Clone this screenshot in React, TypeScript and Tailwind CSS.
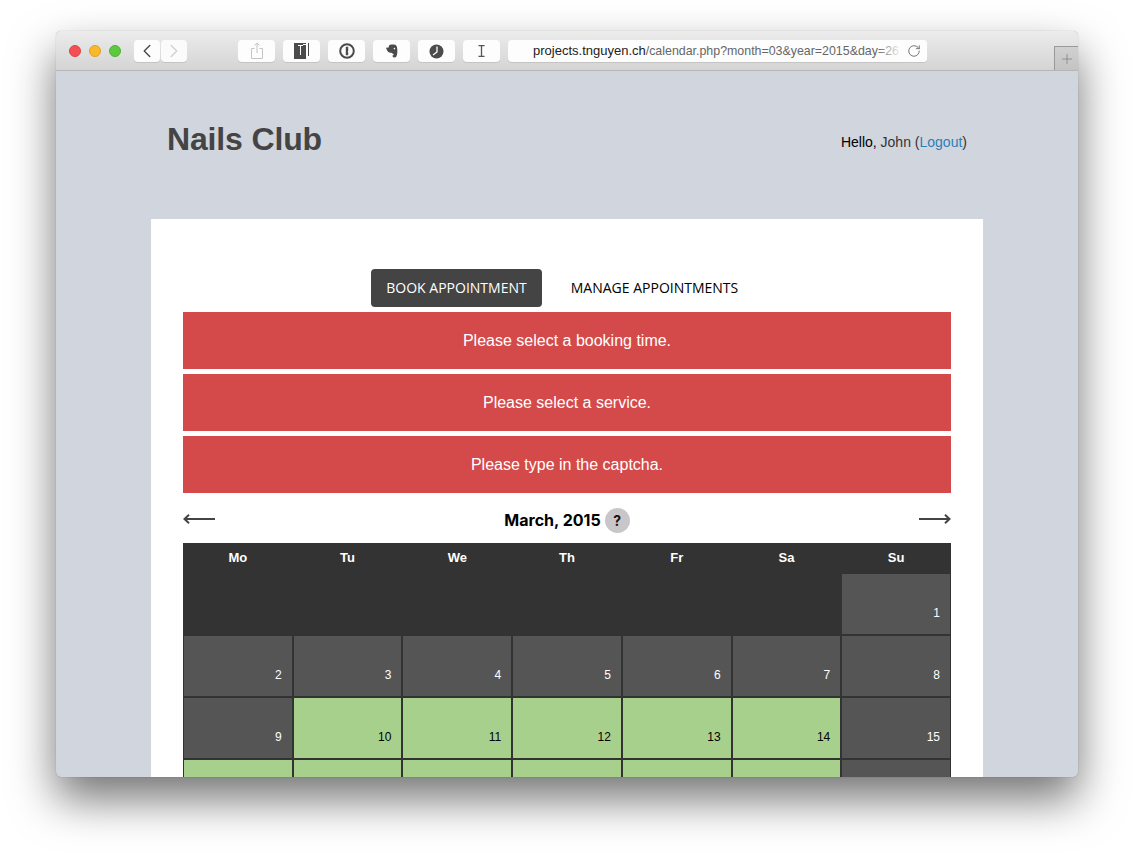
import React from "react";
import { ChevronLeft, ChevronRight, RotateCw, Plus } from "lucide-react";

const ToolButton = ({ children }: { children: React.ReactNode }) => (
  <div className="w-[37px] h-[22px] bg-[#fdfdfd] rounded-[4px] shadow-[0_1px_0_#c4c4c4] flex items-center justify-center">
    {children}
  </div>
);

const ShareIcon = () => (
  <svg width="14" height="18" viewBox="0 0 14 18" fill="none" stroke="#c4c4c4" strokeWidth="1">
    <path d="M4.5 6.5H1.5V16.5H12.5V6.5H9.5" />
    <path d="M7 11V1M4.5 3.5L7 1L9.5 3.5" />
  </svg>
);

const BookmarkIcon = () => (
  <svg width="15" height="16" viewBox="0 0 15 16">
    <path d="M0 0H12V16H0Z" fill="#4b4b4b" />
    <path d="M4 2H9V3H7V12H6V3H4ZM9 1H14V13H13V2H9Z" fill="#fff" />
    <path d="M14 0H15V13H14Z" fill="#4b4b4b" />
  </svg>
);

const OnePasswordIcon = () => (
  <svg width="16" height="16" viewBox="0 0 16 16">
    <circle cx="8" cy="8" r="6.8" fill="none" stroke="#4b4b4b" strokeWidth="2" />
    <path d="M6.8 3.8H9.2V8.2L8.7 8.8L9.2 9.4V12.2H6.8V8Z" fill="#4b4b4b" />
  </svg>
);

const ElephantIcon = () => (
  <svg width="12" height="14" viewBox="0 0 12 14">
    <path
      d="M3 1.5C4 .3 7 .2 9 .8C10.5 1.3 11 2.6 11.2 4.5C11.6 7.5 11.4 10.4 10.4 12.4C9.6 13.8 7.2 14 6.6 12.6C6.2 11.4 7 10.6 8 11C7 9.4 5.6 8.8 4.4 8.8C2.8 8.8 1.2 7.4 .6 5.2L0 3.8L2.6 3.6Z"
      fill="#4b4b4b"
    />
    <circle cx="8.4" cy="4.6" r=".8" fill="#fff" />
  </svg>
);

const ClockIcon = () => (
  <svg width="15" height="15" viewBox="0 0 15 15">
    <circle cx="7.5" cy="7.5" r="7" fill="#4b4b4b" />
    <path d="M8 2.5V8L4 11" fill="none" stroke="#fff" strokeWidth="1.3" />
  </svg>
);

const BeamIcon = () => (
  <svg width="7" height="12" viewBox="0 0 7 12" fill="none" stroke="#555" strokeWidth="1.3">
    <path d="M.5 .7H6.5M3.5 .7V11.3M.5 11.3H6.5" />
  </svg>
);

const Arrow = ({ flip }: { flip?: boolean }) => (
  <svg width="32" height="12" viewBox="0 0 32 12" fill="none" stroke="#444" className={`mb-[2px] ${flip ? "rotate-180" : ""}`}>
    <path d="M1.5 6H32" strokeWidth="2" />
    <path d="M6 1.8L1.5 6L6 10.2" strokeWidth="2" />
  </svg>
);

const Alert = ({ text }: { text: string }) => (
  <div className="h-[57px] bg-[#d44a4a] text-white text-[16px] flex items-center justify-center">{text}</div>
);

const days = ["Mo", "Tu", "We", "Th", "Fr", "Sa", "Su"];

// 0 = empty, 1 = closed (grey), 2 = open (green)
const rows: { day: number | null; kind: number }[][] = [
  [
    ...[0, 0, 0, 0, 0, 0].map(() => ({ day: null, kind: 0 })),
    { day: 1, kind: 1 },
  ],
  [2, 3, 4, 5, 6, 7, 8].map((d) => ({ day: d, kind: 1 })),
  [9, 10, 11, 12, 13, 14, 15].map((d) => ({ day: d, kind: d === 9 || d === 15 ? 1 : 2 })),
  // this row runs past the window, its numbers are never in view
  [16, 17, 18, 19, 20, 21, 22].map((d) => ({ day: null, kind: d === 22 ? 1 : 2 })),
];

const cellColors: Record<number, string> = {
  0: "bg-[#333333]",
  1: "bg-[#555555] text-white",
  2: "bg-[#a8d08d] text-black",
};

export default function App() {
  return (
    <div
      className="w-[1134px] h-[857px] overflow-hidden bg-white pt-[31px] pl-[56px]"
      style={{ fontFamily: '"Liberation Sans", Arial, sans-serif' }}
    >
      <div className="relative w-[1022px] h-[746px] rounded-[5px] overflow-hidden bg-[#d1d5de] shadow-[0_22px_45px_0_rgba(0,0,0,0.55),0_0_1px_rgba(0,0,0,0.35)]">
        {/* title bar */}
        <div className="h-[40px] bg-gradient-to-b from-[#ececec] to-[#d4d4d4] border-b border-[#b5b5b5] flex items-start pt-[9px] pl-[13px]">
          <div className="flex items-center gap-[8px] h-[22px]">
            <div className="w-[12px] h-[12px] rounded-full bg-[#f25056] border border-[#e0443e]" />
            <div className="w-[12px] h-[12px] rounded-full bg-[#fab82b] border border-[#dea123]" />
            <div className="w-[12px] h-[12px] rounded-full bg-[#5cc93e] border border-[#4fb233]" />
          </div>
          <div className="flex ml-[13px] gap-[1px]">
            <div className="w-[26px] h-[22px] bg-[#fdfdfd] rounded-[4px] shadow-[0_1px_0_#c4c4c4] flex items-center justify-center">
              <ChevronLeft size={22} strokeWidth={1.6} color="#4b4b4b" />
            </div>
            <div className="w-[26px] h-[22px] bg-[#fbfbfb] rounded-[4px] shadow-[0_1px_0_#c4c4c4] flex items-center justify-center">
              <ChevronRight size={22} strokeWidth={1.6} color="#d2d2d2" />
            </div>
          </div>
          <div className="flex gap-[8px] ml-[51px]">
            <ToolButton><ShareIcon /></ToolButton>
            <ToolButton><BookmarkIcon /></ToolButton>
            <ToolButton><OnePasswordIcon /></ToolButton>
            <ToolButton><ElephantIcon /></ToolButton>
            <ToolButton><ClockIcon /></ToolButton>
            <ToolButton><BeamIcon /></ToolButton>
          </div>
          <div className="relative ml-[8px] w-[419px] h-[22px] bg-[#fdfdfd] rounded-[4px] shadow-[0_1px_0_#c4c4c4] pl-[25px] pr-[32px] flex items-center overflow-hidden whitespace-nowrap">
            <span className="text-[#222] text-[13px]">projects.tnguyen.ch</span>
            <span className="text-[#666] text-[12.4px]">/calendar.php?month=03&amp;year=2015&amp;day=26</span>
            <div className="absolute right-0 top-0 h-[22px] w-[50px] bg-gradient-to-r from-transparent via-[#fdfdfd] via-50% to-[#fdfdfd] flex items-center justify-end pr-[6px]">
              <RotateCw size={14} strokeWidth={1.5} color="#666" />
            </div>
          </div>
        </div>
        <div className="absolute right-0 top-[15px] w-[24px] h-[24px] border-l border-t border-[#999999] bg-gradient-to-b from-[#d0d0d0] to-[#c4c4c4] flex items-center justify-center">
          <Plus size={16} strokeWidth={1} color="#777" />
        </div>

        {/* page */}
        <div className="flex justify-between items-start pl-[111px] pr-[111px] pt-[48px] h-[148px]">
          <h1 className="text-[32px] leading-[40px] font-bold text-[#444] tracking-[-0.15px]">Nails Club</h1>
          <p className="text-[14px] leading-[20px] mt-[13px] text-[#333]">
            <span className="text-black">Hello,</span> John (<span className="text-[#2a7fb8]">Logout</span>)
          </p>
        </div>

        <div className="mx-[95px] bg-white px-[32px] pt-[50px] h-[700px]">
          <div className="flex justify-center items-center gap-[14px] h-[38px] pr-[10px] text-[14px] uppercase" style={{ fontFamily: '"Open Sans", sans-serif' }}>
            <div className="h-[38px] w-[171px] bg-[#444444] text-white rounded-[4px] flex items-center justify-center pb-[2px]">Book appointment</div>
            <div className="h-[38px] w-[197px] text-black flex items-center justify-center pb-[2px]">Manage appointments</div>
          </div>
          <div className="flex flex-col gap-[5px] mt-[5px]">
            <Alert text="Please select a booking time." />
            <Alert text="Please select a service." />
            <Alert text="Please type in the captcha." />
          </div>
          <div className="flex items-center justify-between h-[50px] pt-[4px]">
            <Arrow />
            <div className="flex items-center gap-[4px]">
              <span className="text-[16px] font-bold text-black" style={{ fontFamily: "Inter, sans-serif" }}>March, 2015</span>
              <span className="w-[25px] h-[25px] rounded-full bg-[#c8c6c8] text-[#111] text-[14px] font-bold flex items-center justify-center" style={{ fontFamily: "Inter, sans-serif" }}>?</span>
            </div>
            <Arrow flip />
          </div>
          <div className="bg-[#333333]">
            <div className="grid grid-cols-7 h-[31px] text-white text-[13px] font-bold pb-[1px]">
              {days.map((d) => (
                <div key={d} className="flex items-center justify-center">{d}</div>
              ))}
            </div>
            <div className="grid grid-cols-7 gap-x-[2px] gap-y-[2px] px-[1px]">
              {rows.flat().map((c, i) => (
                <div key={i} className={`h-[60px] flex items-end justify-end pr-[10px] pb-[14px] text-[12px] leading-[14px] ${cellColors[c.kind]}`}>
                  {c.day}
                </div>
              ))}
            </div>
          </div>
        </div>
      </div>
    </div>
  );
}
